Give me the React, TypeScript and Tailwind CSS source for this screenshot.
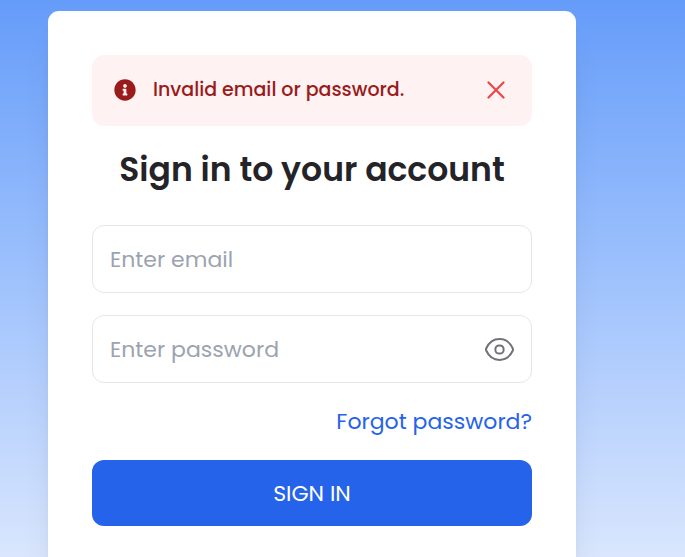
import { useState } from "react";
import { FaInfoCircle } from "react-icons/fa";

function CloseIcon() {
  return (
    <svg viewBox="0 0 18 18" className="size-[18px]" fill="none" stroke="currentColor" strokeWidth="2.200" strokeLinecap="round" aria-hidden="true">
      <path d="M1.5 1.5 16.5 16.5M16.5 1.5 1.5 16.5" />
    </svg>
  );
}

function EyeIcon() {
  return (
    <svg viewBox="0 0 30 24" className="h-6 w-[30px]" fill="none" stroke="currentColor" strokeWidth="2" strokeLinejoin="round" aria-hidden="true">
      <path d="M1.200 11.500C4 5.300 8.900 2.100 14.500 2.100s10.500 3.200 13.300 9.400c.3.700.3 1.300 0 2-2.800 6.200-7.700 9.400-13.300 9.400S4 19.700 1.200 13.500c-.3-.7-.3-1.300 0-2Z" />
      <rect x="10.400" y="8.400" width="8.200" height="8.200" rx="3.700" />
    </svg>
  );
}

const field =
  "h-[68px] w-full rounded-xl border border-[#e5e7eb] bg-white pl-[17px] text-[22px] text-gray-800 outline-none placeholder:text-[#9ca3af]";

export default function App() {
  const [alertOpen, setAlertOpen] = useState(true);
  const [visible, setVisible] = useState(false);

  return (
    <div className="flex min-h-screen bg-linear-to-b from-[#659cf9] to-[#d9e6fd] pt-[11px] pl-12 font-['Poppins','Inter',sans-serif]">
      <main className="w-full max-w-[528px] rounded-t-[11px] bg-white px-11 pt-11 pb-[31px] shadow-[0_28px_34px_-9px_rgba(0,0,0,0.1),0_11px_14px_-8px_rgba(0,0,0,0.1)]">
        {alertOpen && (
          <div role="alert" className="flex h-[71px] items-center rounded-xl bg-[#fef2f2] pr-[27px] pb-px pl-[22px] text-[#991b1b]">
            <FaInfoCircle className="size-[22px] shrink-0" aria-hidden="true" />
            <p className="ml-[17px] flex-1 text-[19px] leading-[30px] font-medium">Invalid email or password.</p>
            <button type="button" aria-label="Dismiss" onClick={() => setAlertOpen(false)} className="text-[#ef4444]">
              <CloseIcon />
            </button>
          </div>
        )}
        <h1 className="mt-5 text-center text-[33px] leading-12 font-semibold text-[#242428]">Sign in to your account</h1>
        <form className="mt-[31px]" onSubmit={(e) => e.preventDefault()}>
          <input type="email" aria-label="Email" placeholder="Enter email" className={field} />
          <div className="relative mt-[22px]">
            <input type={visible ? "text" : "password"} aria-label="Password" placeholder="Enter password" className={field} />
            <button
              type="button"
              aria-label="Show password"
              onClick={() => setVisible(!visible)}
              className="absolute inset-y-0 right-[17px] flex items-center text-[#71717a]"
            >
              <EyeIcon />
            </button>
          </div>
          <div className="mt-[23px] flex justify-end">
            <a href="#forgot" className="text-[22px] leading-8 text-[#2563eb]">
              Forgot password?
            </a>
          </div>
          <button type="submit" className="mt-[22px] h-[66px] w-full rounded-xl bg-[#2563eb] text-[22px] text-white">
            SIGN IN
          </button>
        </form>
      </main>
    </div>
  );
}
